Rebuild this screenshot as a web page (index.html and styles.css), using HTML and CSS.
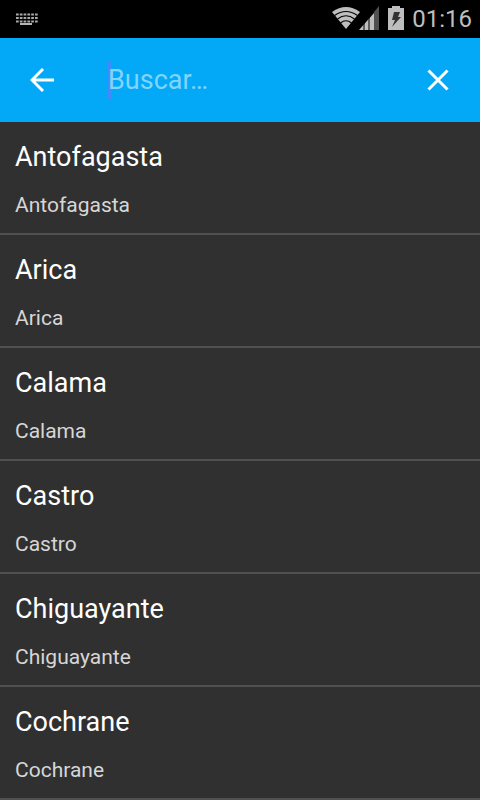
FILE: index.html
```html
<!DOCTYPE html>
<html lang="es">
<head>
<meta charset="utf-8">
<meta name="viewport" content="width=device-width, initial-scale=1">
<title>Buscar</title>
<link rel="stylesheet" href="styles.css">
</head>
<body>
<div class="status">
  <svg class="keyboard" width="24" height="14" viewBox="0 0 24 14" aria-hidden="true">
    <path d="M1 2.500H23M1 6H23M1 9.500H23" stroke="#aaa" stroke-width="2" stroke-dasharray="2.700 1.100"/>
    <path d="M5 12H17" stroke="#b4b4b4" stroke-width="2"/>
  </svg>
  <div class="status-right">
    <svg class="signal" width="48" height="24" viewBox="0 0 48 24" aria-hidden="true">
      <path d="M0 6Q14-4 28 6L14 23Z" fill="#bebebe"/>
      <path d="M2.500 9.500Q14 1.500 25.500 9.500M5.500 13Q14 6.500 22.500 13M8.500 17Q14 12.500 19.500 17" fill="none" stroke="#000" stroke-width="1.100"/>
      <path d="M27 24L42 7V24Z" fill="#bebebe"/>
      <path d="M42 24V6L47 0V24Z" fill="#505050"/>
      <path d="M32 16V24M37 10V24" stroke="#000" stroke-width="1"/>
    </svg>
    <svg class="battery" width="16" height="24" viewBox="0 0 16 24" aria-hidden="true">
      <path d="M4 0H12V2H16V24H0V2H4Z" fill="#bebebe"/>
      <path d="M6 6H12L10 11H13L4 21L7 14H4Z" fill="#333"/>
    </svg>
    <span class="clock">01:16</span>
  </div>
</div>
<header class="toolbar">
  <button class="icon-button" type="button" aria-label="Volver">
    <svg width="24" height="24" viewBox="0 0 24 24" aria-hidden="true"><path d="M24 12H3M13 1L2 12L13 23" fill="none" stroke="#fff" stroke-width="3"/></svg>
  </button>
  <div class="field">
    <input class="search" type="text" placeholder="Buscar…" aria-label="Buscar">
  </div>
  <button class="icon-button" type="button" aria-label="Borrar">
    <svg width="24" height="24" viewBox="0 0 24 24" aria-hidden="true"><path d="M2.500 2.500L21.500 21.500M21.500 2.500L2.500 21.500" stroke="#fff" stroke-width="3"/></svg>
  </button>
</header>
<ul class="list">
  <li class="item"><span class="name">Antofagasta</span><span class="detail">Antofagasta</span></li>
  <li class="item"><span class="name">Arica</span><span class="detail">Arica</span></li>
  <li class="item"><span class="name">Calama</span><span class="detail">Calama</span></li>
  <li class="item"><span class="name">Castro</span><span class="detail">Castro</span></li>
  <li class="item"><span class="name">Chiguayante</span><span class="detail">Chiguayante</span></li>
  <li class="item"><span class="name">Cochrane</span><span class="detail">Cochrane</span></li>
</ul>
</body>
</html>
```
FILE: styles.css
```css
* {
  box-sizing: border-box;
}

body {
  margin: 0;
  background: #303030;
  color: #fff;
  font-family: Roboto, "Liberation Sans", sans-serif;
}

.status {
  display: flex;
  align-items: center;
  justify-content: space-between;
  height: 38px;
  padding: 0 8px 0 15px;
  background: #000;
}

.status-right {
  display: flex;
  align-items: center;
}

.signal {
  margin-bottom: 2px;
}

.battery {
  margin: 0 8px 2px;
}

.clock {
  color: #bebebe;
  font-size: 24px;
  line-height: 38px;
}

.toolbar {
  display: flex;
  align-items: center;
  height: 84px;
  background: #03a9f7;
}

.icon-button {
  display: flex;
  align-items: center;
  justify-content: center;
  width: 84px;
  height: 84px;
  padding: 0;
  border: 0;
  background: none;
}

.field {
  display: flex;
  flex: 1;
  padding-left: 24px;
}

.search {
  width: 100%;
  min-width: 0;
  height: 37px;
  padding: 0;
  border: 0;
  outline: 0;
  background: linear-gradient(#448aff, #448aff) left / 3px 100% no-repeat;
  color: #fff;
  font-family: inherit;
  font-size: 27px;
}

.search::placeholder {
  color: #81d4fb;
  opacity: 1;
}

.list {
  margin: 0;
  padding: 0;
  list-style: none;
}

.item {
  display: flex;
  flex-direction: column;
  gap: 17px;
  padding: 18px 15px 14px;
  border-bottom: 2px solid #505050;
}

.name {
  font-size: 27px;
  line-height: 34px;
}

.detail {
  color: #d6d6d6;
  font-size: 21px;
  line-height: 28px;
}
```
